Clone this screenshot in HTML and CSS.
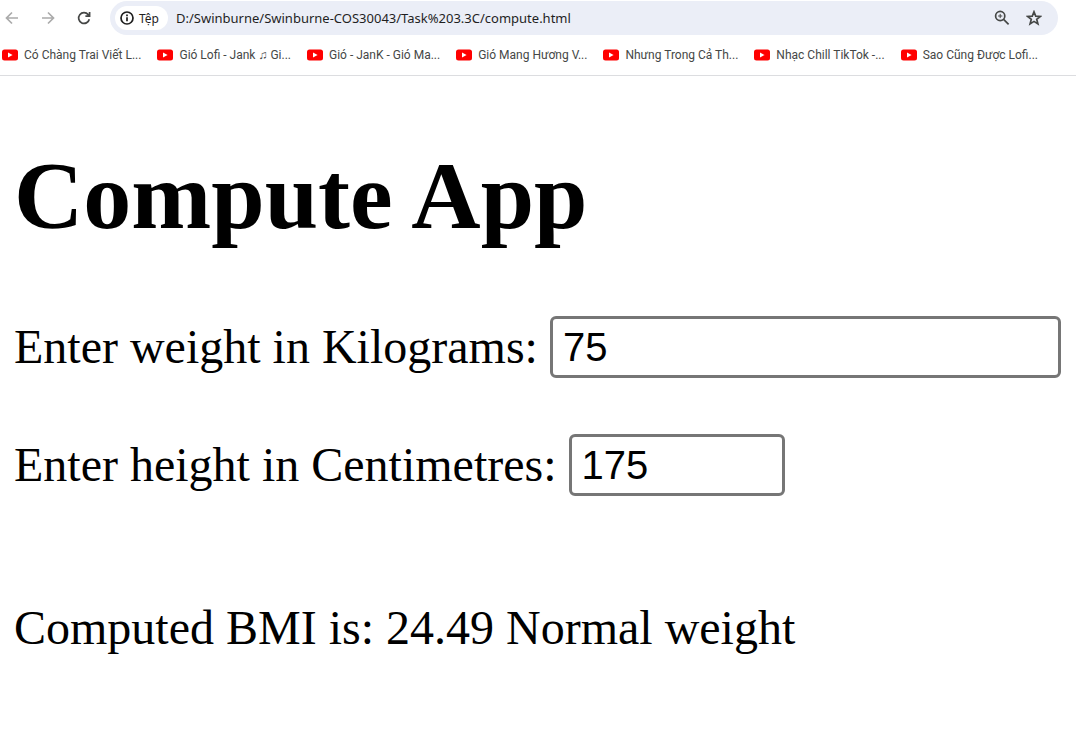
FILE: index.html
```html
<!DOCTYPE html>
<html lang="vi">
<head>
<meta charset="utf-8">
<title>Compute App</title>
<link rel="stylesheet" href="styles.css">
</head>
<body>
<svg class="defs" aria-hidden="true">
  <symbol id="yt" viewBox="0 0 16 12"><rect y="0.5" width="16" height="11" rx="2.5" fill="#f00"/><path d="M6 3.6v4.8L10.6 6z" fill="#fff"/></symbol>
</svg>
<header class="browser">
  <div class="toolbar">
    <button class="nav nav-off" aria-label="Back"><svg viewBox="0 0 16 16"><path d="M14 8H3M8 2.5 2.5 8 8 13.5"/></svg></button>
    <button class="nav nav-off" aria-label="Forward"><svg viewBox="0 0 16 16"><path d="M2 8h11M8 2.5 13.5 8 8 13.5"/></svg></button>
    <button class="nav" aria-label="Reload"><svg viewBox="0 0 16 16"><path d="M13.3 9.2A5.4 5.4 0 1 1 12.2 4.6L13.6 6M13.6 2v4.2H9.4"/></svg></button>
    <div class="omnibox">
      <button class="chip"><svg viewBox="0 0 16 16"><circle cx="8" cy="8" r="6"/><path d="M8 7.2v4M8 4.6v1.6"/></svg>Tệp</button>
      <input class="address" type="text" aria-label="Address" value="D:/Swinburne/Swinburne-COS30043/Task%203.3C/compute.html">
      <button class="action" aria-label="Zoom"><svg viewBox="0 0 16 16"><circle cx="6.2" cy="6" r="4.6"/><path d="M9.6 9.4 14.6 14.4"/><path class="thin" d="M6.2 3.9v4.2M4.1 6h4.2"/></svg></button>
      <button class="action" aria-label="Bookmark"><svg viewBox="0 0 16 16"><path d="M8 1.8 9.7 6.1l4.7.3-3.7 2.9 1.2 4.6L8 11.4l-3.9 2.5 1.2-4.6L1.6 6.4l4.7-.3z"/></svg></button>
    </div>
  </div>
  <nav class="bookmarks">
    <a href="#"><svg><use href="#yt"/></svg>Có Chàng Trai Viết L...</a>
    <a href="#"><svg><use href="#yt"/></svg>Gió Lofi - Jank ♫ Gi...</a>
    <a href="#"><svg><use href="#yt"/></svg>Gió - JanK - Gió Ma...</a>
    <a href="#"><svg><use href="#yt"/></svg>Gió Mang Hương V...</a>
    <a href="#"><svg><use href="#yt"/></svg>Nhưng Trong Cả Th...</a>
    <a href="#"><svg><use href="#yt"/></svg>Nhạc Chill TikTok -...</a>
    <a href="#"><svg><use href="#yt"/></svg>Sao Cũng Được Lofi...</a>
  </nav>
</header>
<main class="page">
  <h1 class="title">Compute App</h1>
  <div class="field">
    <label for="weight">Enter weight in Kilograms:</label>
    <input class="entry" id="weight" type="text" value="75">
  </div>
  <div class="field">
    <label for="height">Enter height in Centimetres:</label>
    <input class="entry entry-short" id="height" type="text" value="175">
  </div>
  <p class="result">Computed BMI is: 24.49 Normal weight</p>
</main>
</body>
</html>
```
FILE: styles.css
```css
* { box-sizing: border-box; }
body { margin: 0; background: #fff; color: #000; }
button { border: 0; padding: 0; background: none; font: inherit; color: inherit; }
svg { fill: none; stroke: currentColor; stroke-width: 1.7; flex: none; }
.defs { position: absolute; width: 0; height: 0; }
symbol { stroke: none; }

.browser {
  font-family: Roboto, "Noto Sans", sans-serif;
  color: #1f1f1f;
  border-bottom: 1px solid #dcdde0;
}
.toolbar { display: flex; align-items: center; height: 36px; padding: 1px 18px 1px 4px; }
.nav { display: flex; width: 36px; color: #454746; }
.nav svg { width: 16px; height: 16px; }
.nav-off { color: #ababab; }
.omnibox {
  flex: 1;
  display: flex;
  align-items: center;
  min-width: 0;
  height: 34px;
  margin-left: -2px;
  padding: 0 16px 0 5px;
  border-radius: 17px;
  background: #ebeef7;
}
.chip {
  display: flex;
  align-items: center;
  gap: 4px;
  height: 24px;
  padding: 0 9px 0 4px;
  border-radius: 12px;
  background: #fff;
  font-family: "Noto Sans", sans-serif;
  font-size: 12px;
}
.chip svg { width: 16px; height: 16px; }
.address {
  flex: 1;
  min-width: 0;
  margin-left: 8px;
  padding: 0;
  border: 0;
  background: none;
  font: 13px "Noto Sans", sans-serif;
  color: inherit;
}
.action { margin-left: 16px; color: #454746; }
.action svg { display: block; width: 16px; height: 16px; }
.action .thin { stroke-width: 1; }

.bookmarks { display: flex; align-items: center; gap: 16px; height: 39px; padding: 0 2px 2px; }
.bookmarks a {
  display: flex;
  align-items: center;
  gap: 6px;
  white-space: nowrap;
  font-size: 12px;
  line-height: 16px;
  color: #454746;
  text-decoration: none;
}
.bookmarks svg { width: 16px; height: 12px; stroke: none; }

.page { padding: 64px 15px 64px 14px; font: 48px/56px "Liberation Serif", serif; }
.title { margin: 0 0 64px; font-size: 96px; line-height: 112px; }
.field { display: flex; align-items: center; gap: 12px; margin-bottom: 56px; }
.field label { white-space: nowrap; }
.entry {
  flex: 1;
  min-width: 0;
  height: 62px;
  padding: 0 10px;
  border: 3px solid #767676;
  border-radius: 6px;
  font: 40px "Liberation Sans", sans-serif;
  color: #000;
  background: #fff;
}
.entry-short { flex: 0 1 216px; }
.result { margin: 104px 0 0; }
```
